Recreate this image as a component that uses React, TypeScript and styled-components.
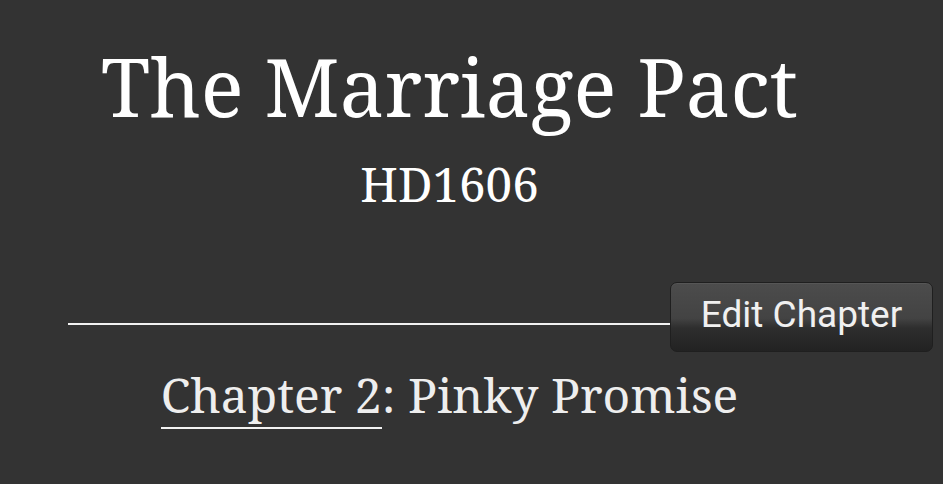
import styled, { createGlobalStyle } from 'styled-components';

const GlobalStyle = createGlobalStyle`
  html, body {
    margin: 0;
    padding: 0;
    background: #333333;
  }
  body {
    height: 484px;
    overflow: hidden;
  }
`;

const serif = '"Noto Serif", "Droid Serif", "DejaVu Serif", serif';

const Page = styled.div`
  padding: 8px;
  color: #ffffff;
  font-family: ${serif};
`;

const Header = styled.header`
  margin-right: 44px;
  text-align: center;
`;

const Title = styled.h1`
  margin: 0;
  padding-top: 30px;
  font-size: 80px;
  font-weight: normal;
  line-height: 96px;
`;

const Author = styled.h2`
  margin: 0;
  padding-top: 20px;
  font-size: 47.5px;
  font-weight: normal;
  line-height: 60px;
`;

const Toolbar = styled.div`
  display: flex;
  align-items: center;
  margin-top: 68px;
  padding-left: 60px;
`;

/* the rule sits a little below the button's middle */
const Rule = styled.div`
  flex: 1;
  height: 2px;
  margin-top: 14px;
  background: #f2f2f2;
`;

const EditButton = styled.button`
  flex: none;
  width: 263px;
  height: 70px;
  margin-right: 2px;
  padding: 0 0 5px;
  border: 1px solid #1f1f1f;
  border-radius: 7px;
  color: #f0f0f0;
  font-family: Roboto, "Liberation Sans", sans-serif;
  font-size: 37px;
  background: linear-gradient(
    to bottom,
    #4c4c4c 0%,
    #434343 52%,
    #2e2e2e 66%,
    #222222 100%
  );
  box-shadow: inset 0 1px 0 rgba(255, 255, 255, 0.06);
  cursor: pointer;
`;

const ChapterHeading = styled.h3`
  margin: 13px 44px 0 0;
  text-align: center;
  font-size: 48px;
  font-weight: normal;
  line-height: 60px;
  color: #eeeeee;
`;

const ChapterLink = styled.a`
  color: inherit;
  text-decoration: none;
  border-bottom: 2px solid #f2f2f2;
`;

export default function App() {
  return (
    <>
      <GlobalStyle />
      <Page>
        <Header>
          <Title>The Marriage Pact</Title>
          <Author>HD1606</Author>
        </Header>
        <Toolbar>
          <Rule />
          <EditButton>Edit Chapter</EditButton>
        </Toolbar>
        <ChapterHeading>
          <ChapterLink href="#">Chapter 2</ChapterLink>: Pinky Promise
        </ChapterHeading>
      </Page>
    </>
  );
}
